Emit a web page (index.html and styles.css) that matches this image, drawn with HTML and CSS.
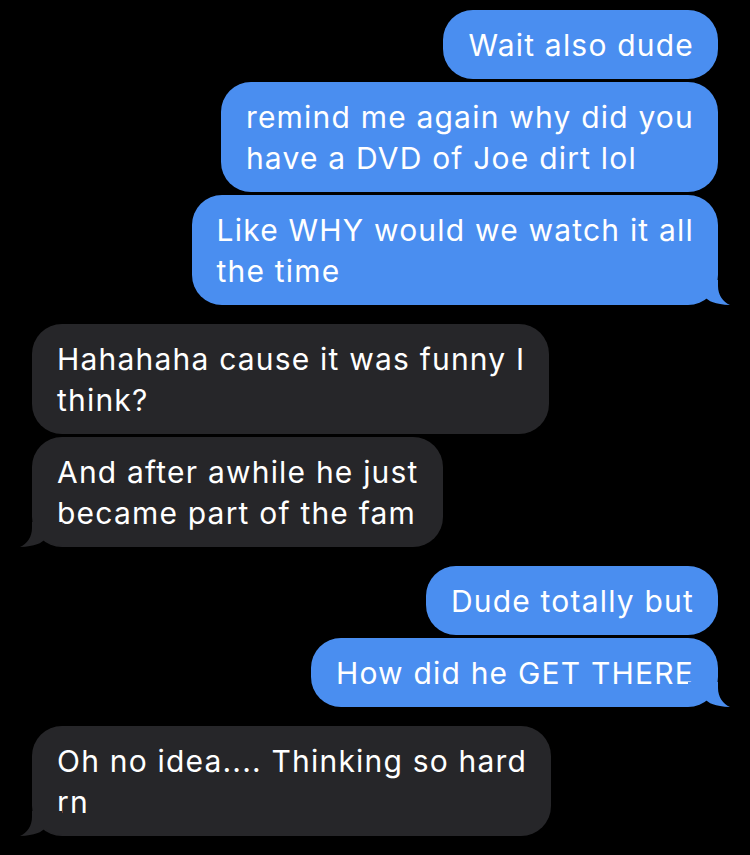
FILE: index.html
```html
<!DOCTYPE html>
<html>
<head>
<meta charset="utf-8">
<link rel="stylesheet" href="styles.css">
</head>
<body>
<div class="thread">
  <div class="group me">
    <div class="bubble">Wait also dude</div>
    <div class="bubble">remind me again why did you<br>have a DVD of Joe dirt lol</div>
    <div class="bubble tail">Like WHY would we watch it all<br>the time<svg class="tail-svg" viewBox="0 0 42 25" width="42" height="25"><path d="M0 24 C8 24 14 21 17 17 C20 21 27 24.5 42 25 C35 22 30 15 30 6 L30 0 L0 0 Z"/></svg></div>
  </div>
  <div class="group them">
    <div class="bubble">Hahahaha cause it was funny I<br>think?</div>
    <div class="bubble tail">And after awhile he just<br>became part of the fam<svg class="tail-svg" viewBox="0 0 42 25" width="42" height="25"><path d="M0 24 C8 24 14 21 17 17 C20 21 27 24.5 42 25 C35 22 30 15 30 6 L30 0 L0 0 Z"/></svg></div>
  </div>
  <div class="group me">
    <div class="bubble">Dude totally but</div>
    <div class="bubble tail">How did he GET THERE<svg class="tail-svg" viewBox="0 0 42 25" width="42" height="25"><path d="M0 24 C8 24 14 21 17 17 C20 21 27 24.5 42 25 C35 22 30 15 30 6 L30 0 L0 0 Z"/></svg></div>
  </div>
  <div class="group them">
    <div class="bubble tail">Oh no idea.... Thinking so hard<br>rn<svg class="tail-svg" viewBox="0 0 42 25" width="42" height="25"><path d="M0 24 C8 24 14 21 17 17 C20 21 27 24.5 42 25 C35 22 30 15 30 6 L30 0 L0 0 Z"/></svg></div>
  </div>
</div>
</body>
</html>
```
FILE: styles.css
```css
html, body {
  margin: 0;
  padding: 0;
  background: #000;
}
body {
  width: 750px;
  height: 855px;
  overflow: hidden;
  font-family: Inter, "Noto Sans", sans-serif;
}
.thread {
  display: flex;
  flex-direction: column;
  gap: 19px;
  padding: 10px 32px 0 32px;
}
.group {
  display: flex;
  flex-direction: column;
  gap: 3px;
}
.group.me {
  align-items: flex-end;
}
.group.them {
  align-items: flex-start;
}
.bubble {
  position: relative;
  padding: 15px 24px 13px 25px;
  font-size: 30px;
  line-height: 41px;
  letter-spacing: 1.2px;
  color: #fff;
  border-radius: 30px;
  white-space: nowrap;
}
.me .bubble {
  background: #4a8ef0;
}
.them .bubble {
  background: #262629;
}
.tail-svg {
  position: absolute;
  bottom: 0;
}
.me .tail-svg {
  right: -12px;
  fill: #4a8ef0;
}
.them .tail-svg {
  left: -12px;
  fill: #262629;
  transform: scaleX(-1);
}
```
